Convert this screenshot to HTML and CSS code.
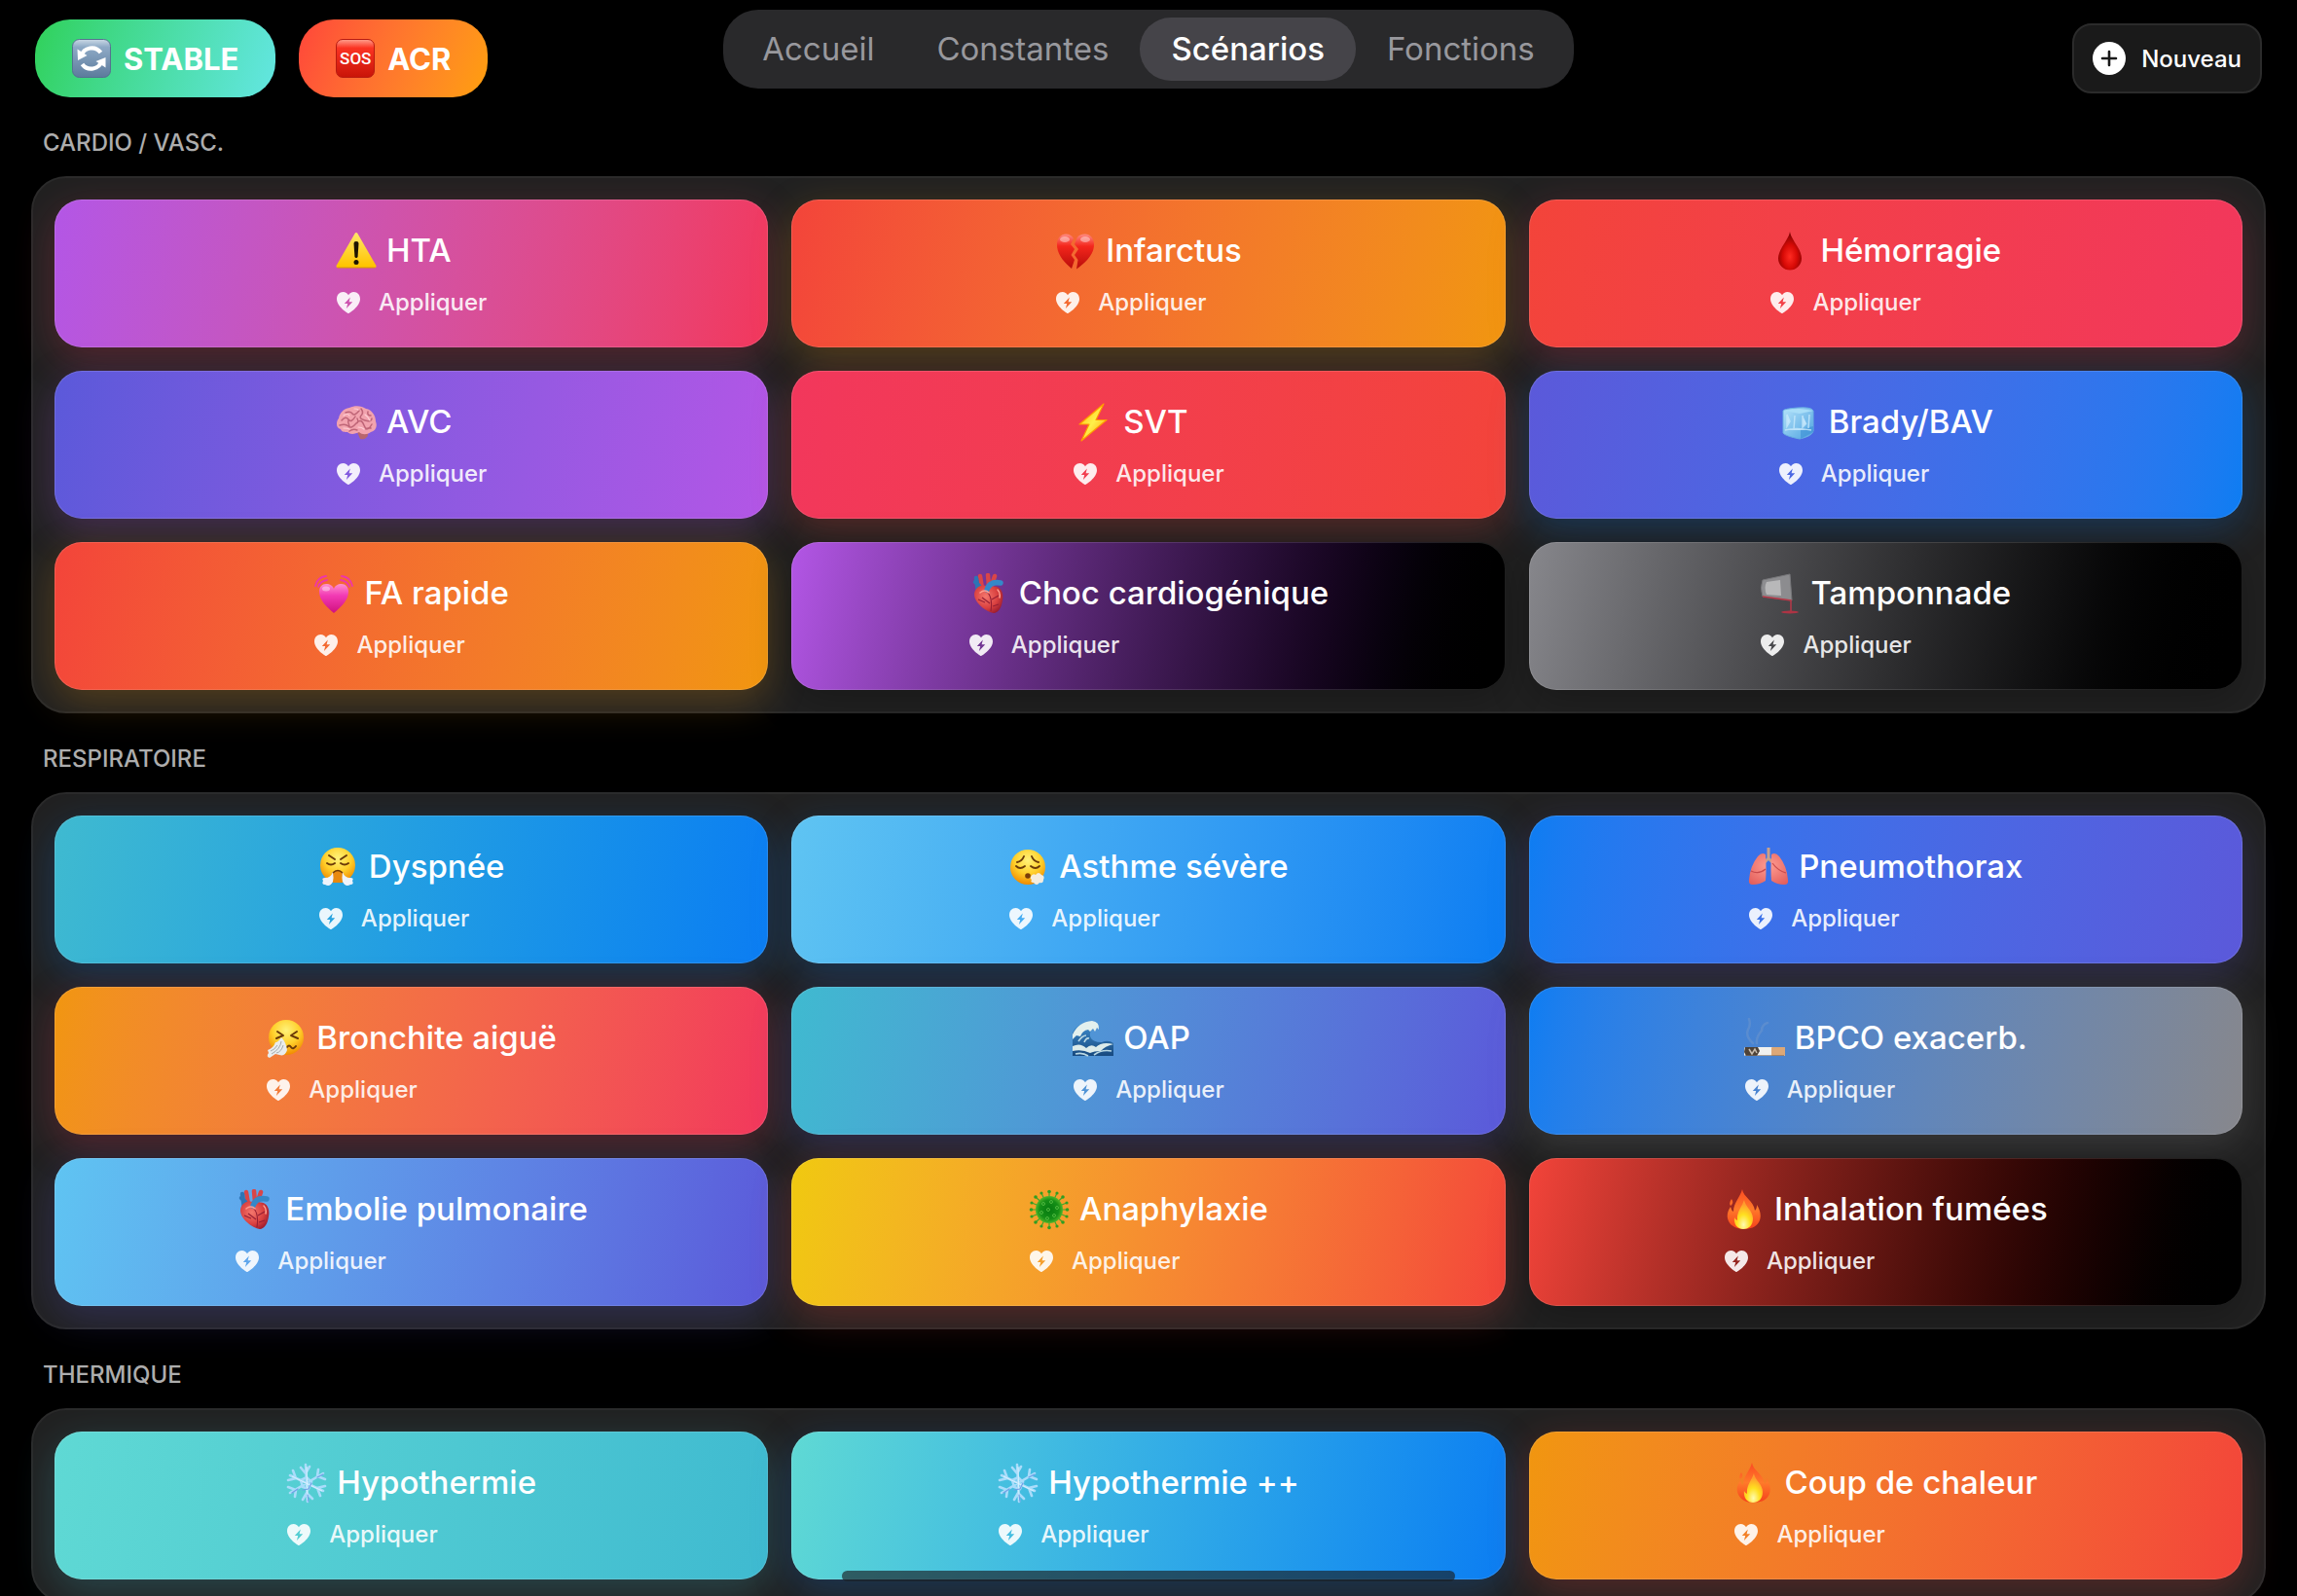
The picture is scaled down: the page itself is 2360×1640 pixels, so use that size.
FILE: index.html
```html
<!DOCTYPE html>
<html lang="fr">
<head>
<meta charset="utf-8">
<meta name="viewport" content="width=device-width, initial-scale=1">
<title>Scénarios</title>
<link rel="stylesheet" href="styles.css">
</head>
<body>
<svg class="sprite" aria-hidden="true">
  <defs>
    <radialGradient id="g-face" cx=".5" cy=".3" r=".7"><stop offset="0" stop-color="#fff27a"/><stop offset=".55" stop-color="#ffd02b"/><stop offset="1" stop-color="#f08a00"/></radialGradient>
    <linearGradient id="g-warn" x1="0" y1="0" x2="0" y2="1"><stop offset="0" stop-color="#ffe566"/><stop offset="1" stop-color="#ffc400"/></linearGradient>
    <linearGradient id="g-red" x1="0" y1="0" x2="0" y2="1"><stop offset="0" stop-color="#ff8a80"/><stop offset=".35" stop-color="#f4261c"/><stop offset="1" stop-color="#b80d0a"/></linearGradient>
    <radialGradient id="g-drop" cx=".5" cy=".65" r=".6"><stop offset="0" stop-color="#ff2b22"/><stop offset=".5" stop-color="#d80a06"/><stop offset="1" stop-color="#7d0202"/></radialGradient>
    <linearGradient id="g-pink" x1="0" y1="0" x2="0" y2="1"><stop offset="0" stop-color="#ff8fce"/><stop offset=".4" stop-color="#f23ab4"/><stop offset="1" stop-color="#d0107e"/></linearGradient>
    <linearGradient id="g-bolt" x1="0" y1="0" x2="1" y2="1"><stop offset="0" stop-color="#ffb300"/><stop offset=".5" stop-color="#fff04a"/><stop offset="1" stop-color="#ff9800"/></linearGradient>
    <linearGradient id="g-ice" x1="0" y1="0" x2="1" y2="1"><stop offset="0" stop-color="#b4e2fa"/><stop offset="1" stop-color="#4ea3e0"/></linearGradient>
    <radialGradient id="g-organ" cx=".4" cy=".4" r=".7"><stop offset="0" stop-color="#f4776d"/><stop offset=".6" stop-color="#d9403f"/><stop offset="1" stop-color="#96182c"/></radialGradient>
    <radialGradient id="g-lung" cx=".5" cy=".4" r=".7"><stop offset="0" stop-color="#ff9d92"/><stop offset="1" stop-color="#e4605c"/></radialGradient>
    <linearGradient id="g-wave" x1="0" y1="0" x2="0" y2="1"><stop offset="0" stop-color="#3f8fd0"/><stop offset="1" stop-color="#17497f"/></linearGradient>
    <radialGradient id="g-virus"><stop offset="0" stop-color="#067a10"/><stop offset=".7" stop-color="#158f17"/><stop offset="1" stop-color="#4fb52a"/></radialGradient>
    <linearGradient id="g-fire" x1="0" y1="0" x2="0" y2="1"><stop offset="0" stop-color="#fb4a22"/><stop offset=".5" stop-color="#ff7a2a"/><stop offset="1" stop-color="#f5401c"/></linearGradient>
    <radialGradient id="g-flame" cx=".5" cy=".85" r=".7"><stop offset="0" stop-color="#fffbb0"/><stop offset=".5" stop-color="#ffe01f"/><stop offset="1" stop-color="#ff9c2e"/></radialGradient>
    <linearGradient id="g-slate" x1="0" y1="0" x2="0" y2="1"><stop offset="0" stop-color="#cbd9e6"/><stop offset=".2" stop-color="#8eaac6"/><stop offset="1" stop-color="#5c7b9c"/></linearGradient>
  </defs>

  <symbol id="heart-bolt" viewBox="0 0 24 22">
    <path fill="currentColor" fill-rule="evenodd" d="M12 22C11 22 0 14.500 0 7.200 0 3 2.800 0 6.500 0 9 0 11 1.300 12 3.300 13 1.300 15 0 17.500 0 21.200 0 24 3 24 7.200 24 14.500 13 22 12 22ZM13.800 5.400 7.800 11.900H11.200L9.900 16.900 16.200 10.200H12.600Z"/>
  </symbol>

  <symbol id="plus" viewBox="0 0 34 34">
    <circle cx="17" cy="17" r="17" fill="#fff"/>
    <path d="M17 10V24M10 17H24" stroke="#1a1a1a" stroke-width="2.600" stroke-linecap="round"/>
  </symbol>

  <symbol id="reload" viewBox="0 0 40 40">
    <rect x=".5" y=".5" width="39" height="39" rx="7" fill="url(#g-slate)" stroke="#55718f"/>
    <g fill="none" stroke="#fff" stroke-width="4.200"><path d="M9.500 17.500A11.300 11.300 0 0 1 29.500 14"/><path d="M30.500 22.500A11.300 11.300 0 0 1 10.500 26"/></g>
    <path fill="#fff" d="M5.500 10.500 15.500 17 6 22ZM34.500 29.500 24.500 23 34.500 19Z"/>
  </symbol>

  <symbol id="warning" viewBox="0 0 42 42">
    <path d="M21 3.500 40 36.500H2Z" fill="url(#g-warn)" stroke="url(#g-warn)" stroke-width="3" stroke-linejoin="round"/>
    <path d="M2 38H40" stroke="#d99a00" stroke-width="1" stroke-linecap="round"/>
    <path d="M18.500 13Q18.500 11 21 11T23.500 13L22.600 26.500Q22.400 28 21 28T19.400 26.500Z" fill="#1c1400"/><circle cx="21" cy="32.500" r="2.500" fill="#1c1400"/>
  </symbol>

  <symbol id="broken-heart" viewBox="0 0 42 42">
    <path fill="url(#g-red)" d="M17 39C10 33 2 25 2 14.500 2 7.500 6 3.500 11 3.500 15 3.500 17 5 19 8L16 14 20 19 16.500 25 20 30Z"/>
    <path fill="url(#g-red)" d="M22 39.500 23.500 30 20 25 24 19 20 14 22.500 7.500C24 5 27 3.500 31 3.500 36 3.500 40 7.500 40 14.500 40 25 31 33 22 39.500Z"/>
    <ellipse cx="10" cy="9" rx="5" ry="3" fill="#fff" opacity=".4"/><ellipse cx="31" cy="9" rx="5" ry="3" fill="#fff" opacity=".4"/>
  </symbol>

  <symbol id="drop" viewBox="0 0 42 42">
    <path d="M21 1C22 9 33 19 33 28.500A12 12 0 0 1 9 28.500C9 19 20 9 21 1Z" fill="url(#g-drop)"/>
  </symbol>

  <symbol id="brain" viewBox="0 0 42 42">
    <path fill="#b8666d" d="M22 31C26 29 33 30 33 33 33 37 29 39 25 38Z"/>
    <path fill="#f2a3ae" d="M5 28C0 27 0 20 3 17 4 11 8 7 14 6 20 3 27 4 31 7 37 8 41 14 41 20 43 25 41 30 36 31 32 34 27 34 24 31 20 33 15 34 12 31 9 31 6 31 5 28Z"/>
    <g fill="none" stroke="#bf6577" stroke-width="1.500" stroke-linecap="round"><path d="M6 19Q10 14 13 18T20 15M10 11Q15 9 17 12T24 9M26 7Q29 11 26 14T30 19 37 17M4 24Q10 22 13 25T21 22 29 24 37 23M14 30Q18 27 22 29M33 10Q32 14 36 14M22 17Q24 21 21 22M31 28Q33 26 36 27M13 18Q12 21 14 25"/></g>
    <g fill="none" stroke="#ffd0d6" stroke-width="1.200" stroke-linecap="round"><path d="M8 14Q12 11 14 14M19 7Q22 7 23 8M30 13Q33 15 35 19M8 27Q12 27 14 28M23 26Q27 26 29 28"/></g>
  </symbol>

  <symbol id="bolt" viewBox="0 0 42 42">
    <path d="M32 2 7 23H17L9 40 35 18.500H24Z" fill="url(#g-bolt)" stroke="#ff9a00" stroke-width="1.200" stroke-linejoin="round"/>
  </symbol>

  <symbol id="ice" viewBox="0 0 42 42">
    <path d="M5 9Q6 7 20 6T36 9L36 30Q35 35 22 38 7 35 5 32Z" fill="url(#g-ice)" stroke="#68afe2"/>
    <path d="M6 9 22 12 36 9 21 7Z" fill="#a9def8"/><path d="M23 28 36 25V31L23 38Z" fill="#3c8fd4" opacity=".6"/>
    <path d="M9 13V25L12 20ZM17 14 16 28M25 14 25 26 29 22M32 13 31 27M7 29Q18 26 34 29" fill="#d3efff" stroke="#c8e9fc" stroke-width="1.500" opacity=".8"/>
  </symbol>

  <symbol id="beating-heart" viewBox="0 0 42 42">
    <path fill="url(#g-pink)" d="M21 41C14 35 6 28 6 19 6 14 9 11 13 11 17 11 20 13 21 16 22 13 25 11 29 11 33 11 36 14 36 19 36 28 28 35 21 41Z"/>
    <ellipse cx="13" cy="16" rx="4" ry="2.500" fill="#fff" opacity=".4"/>
    <g fill="none" stroke="#ee35ab" stroke-width="1.800" stroke-linecap="round"><path d="M2 13Q4 4 13 3M5 14Q7 8 14 7M29 3Q38 4 40 13M28 7Q35 8 37 14"/></g>
  </symbol>

  <symbol id="organ" viewBox="0 0 42 42">
    <path d="M12 3 14 15M20 2 21 13M27 3 24 12" fill="none" stroke="#d94548" stroke-width="4.500" stroke-linecap="round"/>
    <path d="M8 5 10 20M7 9 11 13" fill="none" stroke="#2d74b5" stroke-width="4.500" stroke-linecap="round"/>
    <path fill="url(#g-organ)" d="M9 15C15 10 20 14 24 14 31 12 37 18 35 28 34 36 30 41 26 41 18 40 6 30 6 22 6 19 7 17 9 15Z"/>
    <path d="M19 17Q22 8 33 10" fill="none" stroke="#3588c8" stroke-width="5.500" stroke-linecap="round"/>
    <path d="M20 20Q25 26 23 39M24 27 31 23M22 31 14 25M25 34 31 32M17 30 10 27" fill="none" stroke="#961f33" stroke-width="1.100"/>
    <path d="M12 20Q17 16 21 20M30 17Q33 20 32 25" fill="none" stroke="#ff9e90" stroke-width="1.500" stroke-linecap="round"/>
  </symbol>

  <symbol id="wine" viewBox="0 0 42 42">
    <path d="M3 7 31 1 33 28 3 24Q0 15 3 7Z" fill="#a9a9ac" fill-opacity=".7" stroke="#77777a" stroke-width="1"/>
    <path d="M7 9 21 7 22 23 7 22Q4 15 7 9Z" fill="#d5d5d6" opacity=".6"/>
    <path d="M3 24 32 28V39" fill="none" stroke="#b73848" stroke-width="1.500"/><ellipse cx="31" cy="40" rx="9" ry="1.500" fill="#ad3444"/>
  </symbol>

  <symbol id="face-steam" viewBox="0 0 42 42">
    <circle cx="20" cy="19" r="18" fill="url(#g-face)"/>
    <path d="M11 9 17 13M29 9 23 13M9 17Q13 20 17 17M23 17Q27 20 31 17" fill="none" stroke="#6b3a08" stroke-width="2" stroke-linecap="round"/>
    <path d="M14 27Q20 21 26 27L25 37H15Z" fill="#e8890e"/><path d="M15 27Q20 22 25 27" fill="none" stroke="#6b3a08" stroke-width="1.600"/>
    <path d="M15 26Q16 32 15 36 12 42 7 39 3 39 5 35 3 32 7 32 13 32 15 26ZM25 26Q24 32 25 36 28 42 33 39 37 39 35 35 37 32 33 32 27 32 25 26Z" fill="#eef3fb"/>
  </symbol>

  <symbol id="face-exhale" viewBox="0 0 42 42">
    <circle cx="20" cy="21" r="18" fill="url(#g-face)"/>
    <path d="M9 16Q14 15 16 10M31 16Q26 15 24 10M8 20Q12 24 17 20M23 20Q28 24 32 20" fill="none" stroke="#6b3a08" stroke-width="1.900" stroke-linecap="round"/>
    <circle cx="20" cy="30" r="2.800" fill="#7a3d08"/>
    <path d="M23 31Q25 27 28 29 31 25 34 29 38 30 36 34 36 38 32 37 29 41 26 37 22 37 24 34 22 33 23 31Z" fill="#f5ecdd"/>
  </symbol>

  <symbol id="face-sneeze" viewBox="0 0 42 42">
    <circle cx="21" cy="20" r="18" fill="url(#g-face)"/>
    <path d="M12 14 18 18 11 21M32 14 26 18 33 21M22 30Q24 27 26 30T31 29" fill="none" stroke="#6b3a08" stroke-width="2" stroke-linecap="round" stroke-linejoin="round"/>
    <path d="M16 20Q21 25 22 33 20 40 14 38L10 37 4 41Q0 40 3 36L2 33Q8 31 10 25 13 25 16 20Z" fill="#e9ecec"/><path d="M16 24Q15 32 6 37M18 28Q16 35 11 36M12 28Q9 33 5 34" fill="none" stroke="#a4abab" stroke-width="1"/>
  </symbol>

  <symbol id="lungs" viewBox="0 0 42 42">
    <path d="M21 1V13M21 12 15 18M21 12 27 18" fill="none" stroke="#c7a08b" stroke-width="3"/>
    <path d="M18 8Q14 5 10 10 2 20 1 34 0 39 5 39 12 39 18 35 19 25 18 8ZM24 8Q28 5 32 10 40 20 41 34 42 39 37 39 30 39 24 35 23 25 24 8Z" fill="url(#g-lung)"/>
    <path d="M3 25Q11 29 18 23M39 27Q31 25 25 17" fill="none" stroke="#c94a4c" stroke-width="1.200"/>
  </symbol>

  <symbol id="wave" viewBox="0 0 42 42">
    <path d="M0 39V15Q6 3 21 5 27 5 27 11 24 9 22 12 17 12 18 19 20 25 30 25 37 22 42 26V39Z" fill="url(#g-wave)"/>
    <path d="M0 17Q6 4 20 3 28 4 27 12L25 10 23 14 21 11 18 14 16 12Q10 13 8 19L4 18 0 22Z" fill="#e3f0ee"/>
    <path d="M0 29Q8 25 14 31 19 26 24 30 30 24 42 27 33 29 29 34 22 34 18 36 10 32 0 34Z" fill="#dcebea"/>
    <path d="M6 24Q10 18 14 18M12 25Q14 20 17 21M22 38Q30 32 40 34M3 37Q10 35 16 39" fill="none" stroke="#b9d8e3" stroke-width="1.600"/>
  </symbol>

  <symbol id="cigarette" viewBox="0 0 42 42">
    <path d="M9 26Q1 19 4 12 7 7 5 1M13 26Q12 20 18 13 18 7 24 5" fill="none" stroke="#a9b4c4" stroke-width="2.500" opacity=".2" stroke-linecap="round"/>
    <rect x="0" y="30" width="42" height="9" rx="1.500" fill="#f1f1ef"/><rect x="28" y="30" width="14" height="9" rx="1" fill="#dda877"/>
    <path d="M1 30H14L16 34 13 39H2L0 35Z" fill="#4d4238"/><path d="M5 32 8 37 11 32 13 36" stroke="#c9beb0" stroke-width="1.500" fill="none"/><path d="M1 38.500H41" stroke="#7d6a5a" opacity=".6"/>
  </symbol>

  <symbol id="virus" viewBox="0 0 42 42">
    <g stroke="#43a52b" stroke-width="1.200"><path d="M21 2V40M2 21H40M7 8 35 34M35 8 7 34M13 4 29 38M29 4 13 38M3 14 39 28M39 14 3 28"/></g>
    <g fill="#2f9e22"><circle cx="21" cy="2.500" r="1.800"/><circle cx="21" cy="39.500" r="1.800"/><circle cx="2.500" cy="21" r="1.800"/><circle cx="39.500" cy="21" r="1.800"/><circle cx="7" cy="8" r="1.800"/><circle cx="35" cy="34" r="1.800"/><circle cx="35" cy="8" r="1.800"/><circle cx="7" cy="34" r="1.800"/><circle cx="13" cy="4" r="1.600"/><circle cx="29" cy="38" r="1.600"/><circle cx="29" cy="4" r="1.600"/><circle cx="13" cy="38" r="1.600"/><circle cx="3" cy="14" r="1.600"/><circle cx="39" cy="28" r="1.600"/><circle cx="39" cy="14" r="1.600"/><circle cx="3" cy="28" r="1.600"/></g>
    <circle cx="21" cy="21" r="14" fill="url(#g-virus)"/>
    <g fill="none" stroke="#4fb840" stroke-width="1"><circle cx="15" cy="15" r="1.500"/><circle cx="23" cy="13" r="1.500"/><circle cx="29" cy="19" r="1.500"/><circle cx="20" cy="21" r="1.500"/><circle cx="13" cy="24" r="1.500"/><circle cx="26" cy="27" r="1.500"/><circle cx="19" cy="30" r="1.500"/></g>
  </symbol>

  <symbol id="fire" viewBox="0 0 42 42">
    <path fill="url(#g-fire)" d="M19 0C20 8 31 12 32 22 34 20 34 18 34 16 38 22 39 29 36 34 33 39 27 41 21 41 13 41 6 38 4 30 3 25 5 21 7 18 8 21 8 22 10 23 10 14 17 8 19 0ZM8 10Q11 14 7 17 5 14 8 10Z"/>
    <path fill="url(#g-flame)" d="M21 11C22 18 30 22 30 30 30 37 26 41 20 41 14 41 10 36 11 29 12 31 13 31 14 32 13 23 19 18 21 11Z"/>
  </symbol>

  <symbol id="snow" viewBox="0 0 42 42">
    <g fill="none" stroke="#a9dcfa" stroke-width="2.600" stroke-linecap="round">
      <path d="M20 2 22 40M4 13 38 29M38 11 4 31M15 5 20 11 24 4M17 38 21 31 27 37M2 18 10 16 7 8M40 24 32 26 35 34M33 7 32 14 40 17M9 35 10 28 2 25"/>
      <path d="M21 15 26 20 23 27 17 25 15 18Z"/>
    </g>
    <path d="M21 4 22 38M6 14 37 29" fill="none" stroke="#e3f6ff" stroke-width=".8"/>
    <path d="M23 40 22 33M38 12 32 15M6 31 12 27M17 28 23 27 26 21" fill="none" stroke="#6f9fe6" stroke-width="1.200" stroke-linecap="round"/>
  </symbol>
</svg>

<header class="topbar">
  <div class="quick">
    <button class="pill pill-stable" type="button"><svg class="pill-icon" aria-hidden="true"><use href="#reload"/></svg>STABLE</button>
    <button class="pill pill-acr" type="button"><span class="sos" aria-hidden="true">SOS</span>ACR</button>
  </div>
  <nav class="tabs">
    <a class="tab" href="#accueil">Accueil</a>
    <a class="tab" href="#constantes">Constantes</a>
    <a class="tab tab-active" href="#scenarios" aria-current="page">Scénarios</a>
    <a class="tab" href="#fonctions">Fonctions</a>
  </nav>
  <div class="actions">
    <button class="new" type="button"><svg class="new-icon" aria-hidden="true"><use href="#plus"/></svg>Nouveau</button>
  </div>
</header>

<main class="content" id="scenarios">
  <section class="group">
    <h2 class="group-title">CARDIO / VASC.</h2>
    <div class="panel">
      <button class="card from-purple to-pink" type="button"><span class="card-body"><span class="card-title"><svg class="emoji" aria-hidden="true"><use href="#warning"/></svg>HTA</span><span class="apply"><svg class="apply-icon" aria-hidden="true"><use href="#heart-bolt"/></svg>Appliquer</span></span></button>
      <button class="card from-red to-orange" type="button"><span class="card-body"><span class="card-title"><svg class="emoji" aria-hidden="true"><use href="#broken-heart"/></svg>Infarctus</span><span class="apply"><svg class="apply-icon" aria-hidden="true"><use href="#heart-bolt"/></svg>Appliquer</span></span></button>
      <button class="card from-red to-pink" type="button"><span class="card-body"><span class="card-title"><svg class="emoji" aria-hidden="true"><use href="#drop"/></svg>Hémorragie</span><span class="apply"><svg class="apply-icon" aria-hidden="true"><use href="#heart-bolt"/></svg>Appliquer</span></span></button>
      <button class="card from-indigo to-purple" type="button"><span class="card-body"><span class="card-title"><svg class="emoji" aria-hidden="true"><use href="#brain"/></svg>AVC</span><span class="apply"><svg class="apply-icon" aria-hidden="true"><use href="#heart-bolt"/></svg>Appliquer</span></span></button>
      <button class="card from-pink to-red" type="button"><span class="card-body"><span class="card-title"><svg class="emoji" aria-hidden="true"><use href="#bolt"/></svg>SVT</span><span class="apply"><svg class="apply-icon" aria-hidden="true"><use href="#heart-bolt"/></svg>Appliquer</span></span></button>
      <button class="card from-indigo to-blue" type="button"><span class="card-body"><span class="card-title"><svg class="emoji" aria-hidden="true"><use href="#ice"/></svg>Brady/BAV</span><span class="apply"><svg class="apply-icon" aria-hidden="true"><use href="#heart-bolt"/></svg>Appliquer</span></span></button>
      <button class="card from-red to-orange" type="button"><span class="card-body"><span class="card-title"><svg class="emoji" aria-hidden="true"><use href="#beating-heart"/></svg>FA rapide</span><span class="apply"><svg class="apply-icon" aria-hidden="true"><use href="#heart-bolt"/></svg>Appliquer</span></span></button>
      <button class="card from-purple to-black" type="button"><span class="card-body"><span class="card-title"><svg class="emoji" aria-hidden="true"><use href="#organ"/></svg>Choc cardiogénique</span><span class="apply"><svg class="apply-icon" aria-hidden="true"><use href="#heart-bolt"/></svg>Appliquer</span></span></button>
      <button class="card from-gray to-black" type="button"><span class="card-body"><span class="card-title"><svg class="emoji" aria-hidden="true"><use href="#wine"/></svg>Tamponnade</span><span class="apply"><svg class="apply-icon" aria-hidden="true"><use href="#heart-bolt"/></svg>Appliquer</span></span></button>
    </div>
  </section>

  <section class="group">
    <h2 class="group-title">RESPIRATOIRE</h2>
    <div class="panel">
      <button class="card from-teal to-blue" type="button"><span class="card-body"><span class="card-title"><svg class="emoji" aria-hidden="true"><use href="#face-steam"/></svg>Dyspnée</span><span class="apply"><svg class="apply-icon" aria-hidden="true"><use href="#heart-bolt"/></svg>Appliquer</span></span></button>
      <button class="card from-cyan to-blue" type="button"><span class="card-body"><span class="card-title"><svg class="emoji" aria-hidden="true"><use href="#face-exhale"/></svg>Asthme sévère</span><span class="apply"><svg class="apply-icon" aria-hidden="true"><use href="#heart-bolt"/></svg>Appliquer</span></span></button>
      <button class="card from-blue to-indigo" type="button"><span class="card-body"><span class="card-title"><svg class="emoji" aria-hidden="true"><use href="#lungs"/></svg>Pneumothorax</span><span class="apply"><svg class="apply-icon" aria-hidden="true"><use href="#heart-bolt"/></svg>Appliquer</span></span></button>
      <button class="card from-orange to-pink" type="button"><span class="card-body"><span class="card-title"><svg class="emoji" aria-hidden="true"><use href="#face-sneeze"/></svg>Bronchite aiguë</span><span class="apply"><svg class="apply-icon" aria-hidden="true"><use href="#heart-bolt"/></svg>Appliquer</span></span></button>
      <button class="card from-teal to-indigo" type="button"><span class="card-body"><span class="card-title"><svg class="emoji" aria-hidden="true"><use href="#wave"/></svg>OAP</span><span class="apply"><svg class="apply-icon" aria-hidden="true"><use href="#heart-bolt"/></svg>Appliquer</span></span></button>
      <button class="card from-blue to-gray" type="button"><span class="card-body"><span class="card-title"><svg class="emoji" aria-hidden="true"><use href="#cigarette"/></svg>BPCO exacerb.</span><span class="apply"><svg class="apply-icon" aria-hidden="true"><use href="#heart-bolt"/></svg>Appliquer</span></span></button>
      <button class="card from-cyan to-indigo" type="button"><span class="card-body"><span class="card-title"><svg class="emoji" aria-hidden="true"><use href="#organ"/></svg>Embolie pulmonaire</span><span class="apply"><svg class="apply-icon" aria-hidden="true"><use href="#heart-bolt"/></svg>Appliquer</span></span></button>
      <button class="card from-yellow to-red" type="button"><span class="card-body"><span class="card-title"><svg class="emoji" aria-hidden="true"><use href="#virus"/></svg>Anaphylaxie</span><span class="apply"><svg class="apply-icon" aria-hidden="true"><use href="#heart-bolt"/></svg>Appliquer</span></span></button>
      <button class="card from-red to-black" type="button"><span class="card-body"><span class="card-title"><svg class="emoji" aria-hidden="true"><use href="#fire"/></svg>Inhalation fumées</span><span class="apply"><svg class="apply-icon" aria-hidden="true"><use href="#heart-bolt"/></svg>Appliquer</span></span></button>
    </div>
  </section>

  <section class="group">
    <h2 class="group-title">THERMIQUE</h2>
    <div class="panel">
      <button class="card from-mint to-teal" type="button"><span class="card-body"><span class="card-title"><svg class="emoji" aria-hidden="true"><use href="#snow"/></svg>Hypothermie</span><span class="apply"><svg class="apply-icon" aria-hidden="true"><use href="#heart-bolt"/></svg>Appliquer</span></span></button>
      <button class="card from-mint to-blue" type="button"><span class="card-body"><span class="card-title"><svg class="emoji" aria-hidden="true"><use href="#snow"/></svg>Hypothermie ++</span><span class="apply"><svg class="apply-icon" aria-hidden="true"><use href="#heart-bolt"/></svg>Appliquer</span></span></button>
      <button class="card from-orange to-red" type="button"><span class="card-body"><span class="card-title"><svg class="emoji" aria-hidden="true"><use href="#fire"/></svg>Coup de chaleur</span><span class="apply"><svg class="apply-icon" aria-hidden="true"><use href="#heart-bolt"/></svg>Appliquer</span></span></button>
    </div>
  </section>
</main>
<div class="home-indicator"></div>
</body>
</html>
```
FILE: styles.css
```css
* {
  box-sizing: border-box;
}

body {
  margin: 0;
  height: 100vh;
  display: flex;
  flex-direction: column;
  overflow: hidden;
  background: #000;
  color: #fff;
  font-family: Inter, "Liberation Sans", sans-serif;
}

button {
  border: 0;
  padding: 0;
  color: inherit;
  font: inherit;
  cursor: pointer;
}

.sprite {
  position: absolute;
  width: 0;
  height: 0;
}

/* Top bar */
.topbar {
  flex: none;
  display: grid;
  grid-template-columns: 1fr auto 1fr;
  align-items: end;
  padding: 10px 36px 0;
}

.quick,
.actions {
  display: flex;
  align-items: center;
  gap: 24px;
  height: 80px;
  margin-top: 10px;
}

.actions {
  justify-content: flex-end;
}

.pill {
  display: flex;
  align-items: center;
  gap: 13px;
  height: 80px;
  padding: 0 38px;
  border-radius: 36px;
  font-size: 31px;
  font-weight: 700;
}

.pill-stable {
  background: linear-gradient(108deg in oklab, #30d158, #63e6e2);
}

.pill-acr {
  background: linear-gradient(112deg in oklab, #ff453a, #ff9f0a);
}

.pill-icon,
.sos {
  width: 40px;
  height: 40px;
}

.sos {
  display: grid;
  place-items: center;
  border: 1px solid #b81a10;
  border-radius: 7px;
  background: linear-gradient(#ff9a88, #fb3322 22%, #c91408);
  font-family: Roboto, sans-serif;
  font-size: 17px;
  font-weight: 500;
}

.tabs {
  align-self: start;
  display: flex;
  padding: 8px;
  border-radius: 36px;
  background: #29292b;
}

.tab {
  padding: 0 32px;
  border-radius: 32px;
  color: #98989d;
  font-size: 33px;
  line-height: 65px;
  text-decoration: none;
}

.tab-active {
  background: #454449;
  color: #fff;
  font-weight: 550;
}

.new {
  display: flex;
  align-items: center;
  gap: 16px;
  height: 72px;
  padding: 0 19px;
  border: 2px solid #2b2b2b;
  border-radius: 20px;
  background: #1a1a1a;
  font-size: 24px;
  font-weight: 550;
}

.new-icon {
  width: 34px;
  height: 34px;
}

/* Scenario groups */
.content {
  flex: 1;
  min-height: 0;
  overflow-y: auto;
  padding: 0 32px 32px;
  scrollbar-width: none;
}

.group-title {
  margin: 32px 12px 19px;
  color: #adadad;
  font-size: 24px;
  font-weight: 550;
  line-height: 30px;
}

.panel {
  display: grid;
  grid-template-columns: repeat(3, 1fr);
  gap: 24px;
  padding: 22px;
  border: 2px solid #2b2b2b;
  border-radius: 36px;
  background: #212121;
}

.card {
  display: flex;
  justify-content: center;
  padding: 32px 32px 31px;
  border-radius: 28px;
  background: linear-gradient(102deg in oklab, var(--from), var(--to));
  box-shadow: 0 12px 40px rgb(from var(--to) r g b / 0.25), inset 0 0 0 1px rgba(255, 255, 255, 0.12);
}

.card-body {
  display: grid;
  gap: 17px;
  text-align: left;
}

.card-title,
.apply {
  display: flex;
  align-items: center;
  white-space: nowrap;
}

.card-title {
  align-items: flex-start;
  gap: 10px;
  font-size: 33px;
  font-weight: 550;
  line-height: 40px;
}

.emoji {
  width: 42px;
  height: 42px;
}

.apply {
  gap: 19px;
  padding-left: 1px;
  color: rgba(255, 255, 255, 0.9);
  font-size: 24px;
  font-weight: 550;
  line-height: 30px;
}

.apply-icon {
  width: 24px;
  height: 22px;
}

.from-purple { --from: #b356e6; }
.from-red { --from: #f3443a; }
.from-indigo { --from: #5b59da; }
.from-pink { --from: #f2375c; }
.from-gray { --from: #87878c; }
.from-teal { --from: #3fbad0; }
.from-cyan { --from: #5fc4f2; }
.from-blue { --from: #0c7df2; }
.from-orange { --from: #f1960f; }
.from-yellow { --from: #f0c90f; }
.from-mint { --from: #5fd9d4; }

.to-pink { --to: #f2375c; }
.to-orange { --to: #f1960f; }
.to-purple { --to: #b356e6; }
.to-red { --to: #f3443a; }
.to-blue { --to: #0c7df2; }
.to-indigo { --to: #5b59da; }
.to-gray { --to: #87878c; }
.to-teal { --to: #3fbad0; }
.to-black { --to: #000; }

/* Floats above the scrolling content */
.home-indicator {
  position: fixed;
  bottom: 15px;
  left: 50%;
  width: 630px;
  height: 11px;
  margin-left: -315px;
  border-radius: 6px;
  background: rgba(26, 32, 36, 0.66);
}
```
